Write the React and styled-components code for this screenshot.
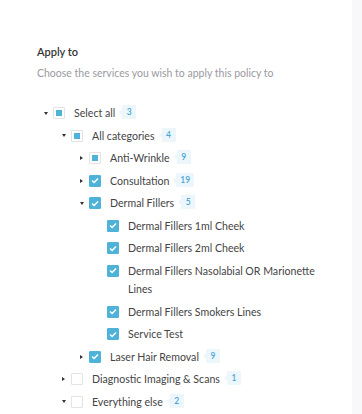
import React from 'react';
import styled, { createGlobalStyle } from 'styled-components';

const GlobalStyle = createGlobalStyle`
  html, body {
    margin: 0;
    padding: 0;
    background: #f8f8fa;
  }
  body {
    font-family: 'Lato', 'Noto Sans', sans-serif;
  }
`;

const Page = styled.div`
  display: flex;
  height: 414px;
`;

const Panel = styled.div`
  width: 352px;
  background: #fff;
  padding: 44px 28px 0 37px;
  box-sizing: border-box;
  overflow: hidden;
`;

const Title = styled.h3`
  margin: 0;
  font-size: 11px;
  font-weight: 600;
  color: #333;
  line-height: 15px;
`;

const Subtitle = styled.p`
  margin: 7px 0 0;
  font-size: 10.5px;
  color: #9a9a9f;
  line-height: 15px;
`;

const Tree = styled.ul`
  list-style: none;
  margin: 21px 0 0;
  padding: 0;
`;

const Row = styled.li`
  display: flex;
  align-items: flex-start;
  padding: 2px 0 2px ${(p) => p.level * 18 + 6}px;
  font-size: 10.6px;
  line-height: 18.5px;
  color: #444;
`;

const Caret = styled.span`
  flex: none;
  width: 5px;
  height: 18.5px;
  margin-right: 5px;
  display: flex;
  align-items: center;
  justify-content: center;
  visibility: ${(p) => (p.hidden ? 'hidden' : 'visible')};
  &::before {
    content: '';
    border-style: solid;
    border-color: transparent;
    ${(p) =>
      p.open
        ? 'border-width: 3px 2.5px 0 2.5px; border-top-color: #333;'
        : 'border-width: 2.5px 0 2.5px 3px; border-left-color: #333;'}
  }
`;

const Box = styled.span`
  flex: none;
  width: 12px;
  height: 12px;
  margin-top: 3px;
  margin-right: 9px;
  box-sizing: border-box;
  border-radius: 1px;
  display: flex;
  align-items: center;
  justify-content: center;
  background: ${(p) => (p.state === 'checked' ? '#4fb3d9' : '#fff')};
  border: 1px solid ${(p) => (p.state === 'checked' ? '#4fb3d9' : '#e3e3e6')};
  svg {
    display: block;
  }
`;

const Dot = styled.span`
  width: 6px;
  height: 6px;
  background: #4fb3d9;
`;

const Label = styled.span`
  flex: 0 1 auto;
`;

const Badge = styled.span`
  position: relative;
  flex: none;
  margin-left: 7px;
  margin-top: 1px;
  min-width: 14px;
  height: 14px;
  padding: 0 4px;
  box-sizing: border-box;
  background: #edf6fb;
  color: #4aa6d6;
  font-size: 8.5px;
  font-weight: 600;
  line-height: 14px;
  text-align: center;
  border-radius: 1px;
  &::before {
    content: '';
    position: absolute;
    left: -3px;
    top: 4px;
    border-style: solid;
    border-width: 3px 3px 3px 0;
    border-color: transparent #edf6fb transparent transparent;
  }
`;

function Check({ state }) {
  return (
    <Box state={state}>
      {state === 'checked' && (
        <svg width="8" height="7" viewBox="0 0 8 7">
          <path d="M1 3.6 L3.1 5.5 L7 1.4" fill="none" stroke="#fff" strokeWidth="1.4" />
        </svg>
      )}
      {state === 'partial' && <Dot />}
    </Box>
  );
}

const items = [
  { level: 0, caret: 'open', state: 'partial', label: 'Select all', count: 3 },
  { level: 1, caret: 'open', state: 'partial', label: 'All categories', count: 4 },
  { level: 2, caret: 'closed', state: 'partial', label: 'Anti-Wrinkle', count: 9 },
  { level: 2, caret: 'closed', state: 'checked', label: 'Consultation', count: 19 },
  { level: 2, caret: 'open', state: 'checked', label: 'Dermal Fillers', count: 5 },
  { level: 3, state: 'checked', label: 'Dermal Fillers 1ml Cheek' },
  { level: 3, state: 'checked', label: 'Dermal Fillers 2ml Cheek' },
  { level: 3, state: 'checked', label: 'Dermal Fillers Nasolabial OR Marionette Lines' },
  { level: 3, state: 'checked', label: 'Dermal Fillers Smokers Lines' },
  { level: 3, state: 'checked', label: 'Service Test' },
  { level: 2, caret: 'closed', state: 'checked', label: 'Laser Hair Removal', count: 9 },
  { level: 1, caret: 'closed', state: 'empty', label: 'Diagnostic Imaging & Scans', count: 1 },
  { level: 1, caret: 'open', state: 'empty', label: 'Everything else', count: 2 },
];

export default function App() {
  return (
    <>
      <GlobalStyle />
      <Page>
        <Panel>
          <Title>Apply to</Title>
          <Subtitle>Choose the services you wish to apply this policy to</Subtitle>
          <Tree>
            {items.map((item, i) => (
              <Row key={i} level={item.level}>
                <Caret open={item.caret === 'open'} hidden={!item.caret} />
                <Check state={item.state} />
                <Label>{item.label}</Label>
                {item.count != null && <Badge>{item.count}</Badge>}
              </Row>
            ))}
          </Tree>
        </Panel>
      </Page>
    </>
  );
}
